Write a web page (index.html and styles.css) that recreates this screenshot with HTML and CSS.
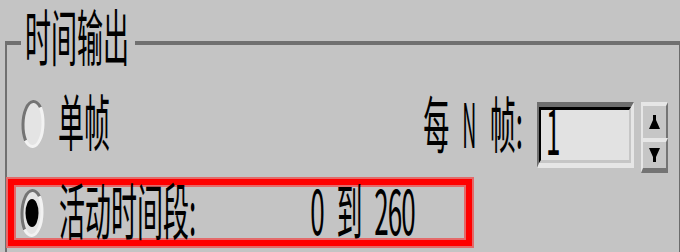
FILE: index.html
```html
<!DOCTYPE html>
<html lang="zh">
<head>
  <meta charset="UTF-8" />
  <title>时间输出</title>
  <link rel="stylesheet" href="styles.css">
</head>
<body>

<fieldset class="group">
  <legend><span class="t">时间输出</span></legend>

  <!-- single frame row -->
  <div class="row single">
    <span class="radio">
      <svg width="24" height="50" viewBox="0 0 24 50">
        <ellipse cx="12" cy="25" rx="10.5" ry="23.5" fill="#e4e4e4"/>
        <path d="M4.6 41.6 A10.5 23.5 0 0 1 19.4 8.4" fill="none" stroke="#747474" stroke-width="3"/>
        <path d="M19.4 8.4 A10.5 23.5 0 0 1 4.6 41.6" fill="none" stroke="#f2f2f2" stroke-width="3"/>
      </svg>
    </span>
    <span class="t">单帧</span>

    <div class="every">
      <span class="t every-label">每 <span class="n">N</span> 帧:</span>
      <div class="spinner">
        <div class="field"><div class="field-in"><span class="t">1</span></div></div>
        <div class="arrows">
          <div class="btn up">
            <svg width="11" height="14" viewBox="0 0 11 14"><path d="M4 0H7V5L11 14H0L4 5Z"/></svg>
          </div>
          <div class="btn down">
            <svg width="11" height="14" viewBox="0 0 11 14"><path d="M0 0H11L7 9V14H4V9Z"/></svg>
          </div>
        </div>
      </div>
    </div>
  </div>

  <!-- active segment row -->
  <div class="row active">
    <span class="radio">
      <svg width="24" height="50" viewBox="0 0 24 50">
        <ellipse cx="12" cy="25" rx="10.5" ry="23.5" fill="#e4e4e4"/>
        <path d="M4.6 41.6 A10.5 23.5 0 0 1 19.4 8.4" fill="none" stroke="#747474" stroke-width="3"/>
        <path d="M19.4 8.4 A10.5 23.5 0 0 1 4.6 41.6" fill="none" stroke="#f2f2f2" stroke-width="3"/>
        <ellipse cx="12" cy="25" rx="6.5" ry="14" fill="#000"/>
      </svg>
    </span>
    <span class="t">活动时间段:</span>
    <span class="t range">0 到 260</span>
  </div>
</fieldset>

</body>
</html>
```

FILE: styles.css
```css
body {
  margin: 0;
  width: 680px;
  height: 252px;
  overflow: hidden;
  background-color: #c4c4c4;
  font-family: "Noto Sans CJK SC", sans-serif;
  font-size: 26px;
  color: #000;
}

.group {
  box-sizing: border-box;
  height: 252px;
  min-width: 0;
  margin: 0 0 0 5px;
  padding: 0 11px 0 14px;
  border: 0;
  border-top: 4px solid #707070;
  border-left: 2px solid #707070;
  border-right: 1px solid #6c6c6c;
}

legend {
  padding: 29px 6px 29px 4px;
  line-height: 28px;
}

/* tall narrow dialog lettering */
.t {
  display: inline-block;
  line-height: 28px;
  white-space: nowrap;
  transform: translateY(-3.5px) scaleY(2.35);
}

legend .t {
  transform: translateY(-8px) scaleY(2.35);
}

.row {
  display: flex;
  align-items: center;
}

.radio svg {
  display: block;
}

.single {
  margin-top: 11px;
  height: 54px;
  gap: 13px;
}

.every {
  align-self: flex-start;
  margin-top: 5px;
  margin-left: auto;
  display: flex;
  align-items: flex-start;
  gap: 14px;
}

.every-label {
  margin-top: 10px;
  word-spacing: 7px;
}

.n {
  display: inline-block;
  transform: scaleX(0.75);
  margin: 0 -2px;
}

.spinner {
  display: flex;
  gap: 7px;
}

.field {
  box-sizing: border-box;
  width: 97px;
  height: 66px;
  border-style: solid;
  border-width: 5px 3px 5px 2px;
  border-color: #6e6e6e #e6e6e6 #e6e6e6 #6e6e6e;
}

.field-in {
  box-sizing: border-box;
  height: 100%;
  display: flex;
  align-items: center;
  padding: 0 0 5px 5px;
  border-style: solid;
  border-width: 3px 2px 3px 2px;
  border-color: #000 #c6c6c6 #c6c6c6 #000;
  background: #e2e2e2;
}

.arrows {
  width: 27px;
  display: flex;
  flex-direction: column;
}

.btn {
  box-sizing: border-box;
  display: flex;
  align-items: center;
  justify-content: center;
  border-style: solid;
  border-color: #e6e6e6 #747474 #747474 #e6e6e6;
  background: #c6c6c6;
}

.btn svg {
  display: block;
}

.up {
  height: 36px;
  border-width: 4px 2px 0 2px;
}

.down {
  height: 35px;
  border-width: 4px 2px 5px 2px;
}

.active {
  box-sizing: border-box;
  width: 464px;
  height: 67px;
  margin: 28px 0 0 -13px;
  padding-left: 6px;
  gap: 15px;
  border: 6px solid #ff0000;
  box-shadow: 0 0 0 2px #e46a6a, inset 0 0 0 2px #e46a6a;
}

.range {
  margin-left: 99px;
  word-spacing: 8px;
  letter-spacing: -1px;
}
```
